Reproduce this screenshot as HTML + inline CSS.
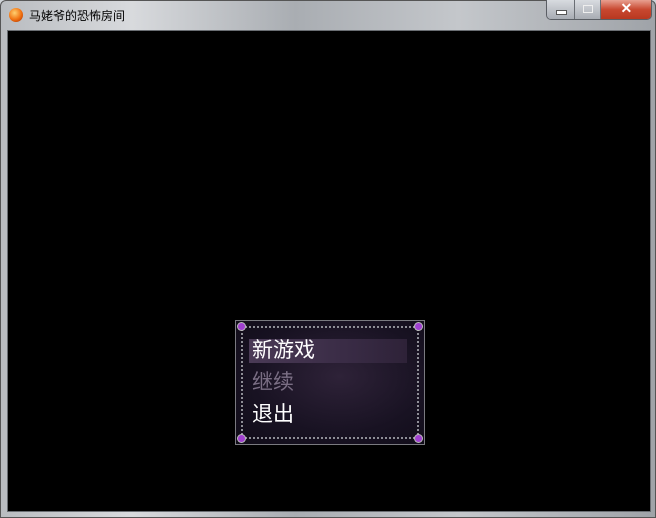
<!DOCTYPE html>
<html><head><meta charset="utf-8"><style>
*{margin:0;padding:0}
body{width:656px;height:518px;overflow:hidden;background:#cfd3d8;font-family:"Liberation Sans","Noto Sans CJK SC",sans-serif;position:relative}
.frame{position:absolute;inset:0;background:linear-gradient(90deg,#b9bcc0 0%,#d8dadd 20%,#a9adb2 45%,#c4c7cb 70%,#9fa3a8 100%);border:1px solid #555;border-radius:6px 6px 0 0}
.content{position:absolute;left:7px;top:30px;width:642px;height:480px;background:#000;border:1px solid #6a6e73}
.title{position:absolute;left:29px;top:7px;font-size:12px;color:#000}
.icon{position:absolute;left:9px;top:8px;width:14px;height:14px;border-radius:50%;background:radial-gradient(circle at 40% 35%,#ffd070,#f07010 55%,#a02800)}
.btns{position:absolute;left:546px;top:0;height:19px;width:104px;border:1px solid #5a5e64;border-top:none;border-radius:0 0 5px 5px;overflow:hidden;display:flex}
.b{height:19px;background:linear-gradient(#d8dbe0,#a8acb3);border-right:1px solid #6a6e74;position:relative}
.x{background:linear-gradient(#e8a090,#c84830 50%,#b83820)}
.menu{position:absolute;left:235px;top:320px;width:188px;height:123px;background:radial-gradient(ellipse at 55% 45%,#2e2238,#181222 60%,#100c18);border:1px solid #7a7a80}
.chain{position:absolute;border:2px dotted #8e8e96}
.gem{position:absolute;width:7px;height:7px;border-radius:50%;background:#a040d0;box-shadow:0 0 0 1px #bbb}
.hl{position:absolute;left:13px;top:18px;width:158px;height:24px;background:linear-gradient(90deg,#4a3a56,#3a2c46 60%,#2e2238)}
.t{position:absolute;left:16px;font-size:21px;color:#fff;line-height:24px}
</style></head><body>
<div class="frame"></div>
<div class="icon"></div>
<div class="title">马姥爷的恐怖房间</div>
<div class="btns">
<div class="b" style="width:27px"><div style="position:absolute;left:9px;top:10px;width:9px;height:3px;background:#fff;border:1px solid #555"></div></div>
<div class="b" style="width:26px"><div style="position:absolute;left:8px;top:5px;width:8px;height:6px;border:1px solid #eee"></div></div>
<div class="b x" style="width:50px;border:none"><div style="position:absolute;left:19px;top:0;color:#fff;font-weight:bold;font-size:14px">✕</div></div>
</div>
<div class="content"></div>
<div class="menu">
<div class="chain" style="left:5px;top:5px;right:5px;bottom:5px"></div>
<div class="gem" style="left:2px;top:2px"></div><div class="gem" style="right:2px;top:2px"></div>
<div class="gem" style="left:2px;bottom:2px"></div><div class="gem" style="right:2px;bottom:2px"></div>
<div class="hl"></div>
<div class="t" style="top:18px">新游戏</div>
<div class="t" style="top:50px;color:#7a6e84">继续</div>
<div class="t" style="top:82px">退出</div>
</div>
</body></html>
